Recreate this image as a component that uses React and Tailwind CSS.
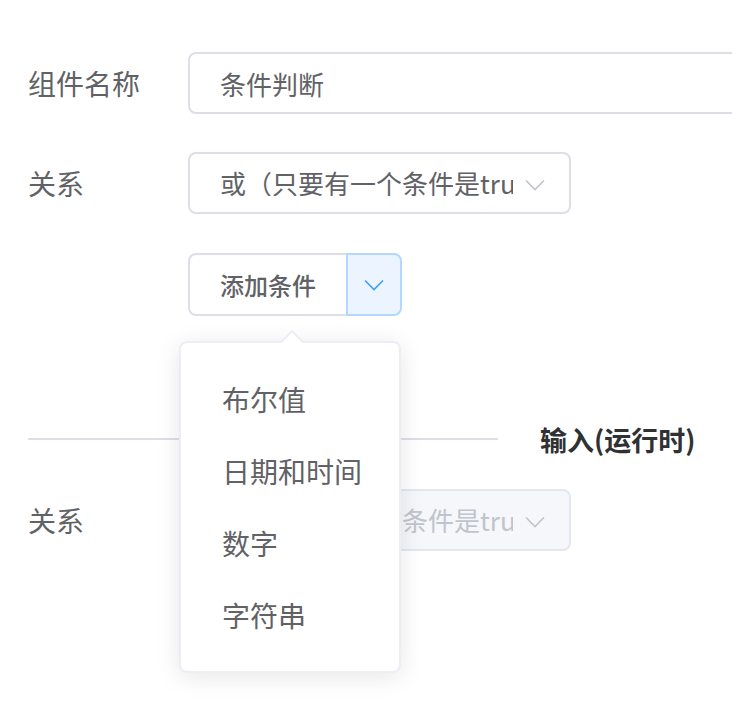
import React from "react";

const font = { fontFamily: '"Noto Sans CJK SC", "Liberation Sans", sans-serif' };

const Chevron = ({ className }) => (
  <svg viewBox="0 0 20 12" className={className} fill="none">
    <path d="M1 1.5 L10 10.5 L19 1.5" stroke="currentColor" strokeWidth="1.6" />
  </svg>
);

const Select = ({ disabled }) => (
  <div
    className={
      "relative shrink-0 flex items-center w-[383px] h-[62px] rounded-[8px] border-2 pl-[30px] " +
      (disabled
        ? "bg-[#f5f7fa] border-[#e4e7ed] text-[#c0c4cc]"
        : "bg-white border-[#dcdfe6] text-[#606266]")
    }
  >
    <div className="w-[293px] overflow-hidden whitespace-nowrap text-[26px] leading-none">
      或（只要有一个条件是true）
    </div>
    <Chevron className="absolute right-[24px] top-[25px] w-[20px] h-[12px] text-[#c0c4cc]" />
  </div>
);

const Label = ({ children }) => (
  <div className="w-[160px] shrink-0 whitespace-nowrap text-[28px] text-[#606266]">{children}</div>
);

const items = ["布尔值", "日期和时间", "数字", "字符串"];

export default function App() {
  return (
    <div className="w-[732px] h-[720px] overflow-hidden bg-white pt-[52px] pl-[28px]" style={font}>
      {/* 组件名称 */}
      <div className="flex items-center mb-[38px]">
        <Label>组件名称</Label>
        <div className="w-[600px] shrink-0 h-[62px] rounded-[8px] border-2 border-[#dcdfe6] flex items-center pl-[30px] text-[26px] text-[#606266]">
          条件判断
        </div>
      </div>

      {/* 关系 */}
      <div className="flex items-center mb-[39px]">
        <Label>关系</Label>
        <Select />
      </div>

      {/* 添加条件 */}
      <div className="flex items-center">
        <div className="w-[160px] shrink-0" />
        <div className="relative flex h-[63px]">
          <div className="w-[158px] h-full flex items-center pl-[30px] border-2 border-r-0 border-[#dcdfe6] rounded-l-[8px] bg-white text-[24px] font-medium text-[#606266]">
            添加条件
          </div>
          <div className="w-[56px] h-full flex items-center justify-center border-2 border-[#b3d8ff] rounded-r-[8px] bg-[#ecf5ff]">
            <Chevron className="w-[20px] h-[12px] text-[#409eff]" />
          </div>

          {/* dropdown */}
          <div className="absolute z-10 left-[-9px] top-[88px] w-[222px] rounded-[8px] border-2 border-[#ebeef5] bg-white py-[20px] shadow-[0_4px_24px_rgba(0,0,0,0.1)]">
            <div className="absolute left-[103px] top-[-10px] w-[16px] h-[16px] rotate-45 bg-white border-t-2 border-l-2 border-[#ebeef5]" />
            {items.map((t) => (
              <div key={t} className="h-[72px] flex items-center pl-[41px] text-[28px] text-[#606266]">
                {t}
              </div>
            ))}
          </div>
        </div>
      </div>

      {/* divider */}
      <div className="flex items-center mt-[110px] mb-[37px] h-[26px]">
        <div className="w-[470px] h-[2px] bg-[#dcdfe6]" />
        <div className="ml-[42px] text-[27px] font-semibold text-[#303133] whitespace-nowrap leading-none">
          输入(运行时)
        </div>
      </div>

      {/* 关系 disabled */}
      <div className="flex items-center">
        <Label>关系</Label>
        <Select disabled />
      </div>
    </div>
  );
}
